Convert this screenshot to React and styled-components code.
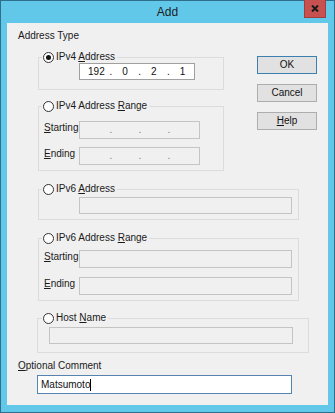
import React from "react";
import styled, { createGlobalStyle } from "styled-components";

const GlobalStyle = createGlobalStyle`
  html, body {
    margin: 0;
    padding: 0;
    background: #ffffff;
  }
  body {
    font-family: "Liberation Sans Narrow", "Liberation Sans", Arial, sans-serif;
    font-size: 10px;
    color: #1a1a1a;
  }
`;

// ---------- window frame ----------

const Window = styled.div`
  width: 335px;
  height: 413px;
  box-sizing: border-box;
  border: 1px solid #2f6f8c;
  background: #62c8ea;
  display: flex;
  flex-direction: column;
`;

const TitleBar = styled.div`
  height: 22px;
  flex: none;
  display: grid;
  grid-template-columns: 1fr auto 1fr;
  align-items: start;
`;

const Title = styled.div`
  grid-column: 2;
  font-family: "Liberation Sans", Arial, sans-serif;
  font-size: 12px;
  line-height: 23px;
  color: #1e1e1e;
`;

const CloseButton = styled.div`
  grid-column: 3;
  justify-self: end;
  margin: -1px 8px 0 0;
  width: 22px;
  height: 18px;
  box-sizing: border-box;
  background: #c75050;
  border: 1px solid #a33d3d;
  border-top: none;
  display: flex;
  align-items: center;
  justify-content: center;
`;

const Client = styled.div`
  flex: none;
  height: 382px;
  margin: 0 6px;
  box-sizing: border-box;
  background: #f0f0f0;
  padding: 7px 0 0 11px;
  display: flex;
  flex-direction: column;
`;

// ---------- layout ----------

const TopRow = styled.div`
  display: flex;
  align-items: flex-start;
`;

const LeftColumn = styled.div`
  width: 206px;
  display: flex;
  flex-direction: column;
`;

const ButtonColumn = styled.div`
  margin-left: 33px;
  padding-top: 26px;
  display: flex;
  flex-direction: column;
  gap: 10px;
`;

const Caption = styled.div`
  line-height: 12px;
  height: 12px;
  white-space: nowrap;
  margin-top: ${(p) => p.$mt || 0}px;
`;

// ---------- group box ----------

const Group = styled.fieldset`
  margin: ${(p) => p.$mt}px 0 0 ${(p) => p.$ml}px;
  padding: ${(p) => p.$pt}px 0 ${(p) => p.$pb}px 0;
  width: ${(p) => p.$w}px;
  box-sizing: border-box;
  min-inline-size: 0;
  border: 1px solid #dcdcdc;
  display: flex;
  flex-direction: column;
  gap: ${(p) => p.$gap || 0}px;
`;

const Legend = styled.legend`
  margin-left: ${(p) => p.$offset}px;
  padding: 0 2px 0 1px;
  height: 12px;
  line-height: 12px;
  display: flex;
  align-items: center;
  gap: 2px;
  white-space: nowrap;
`;

const Radio = styled.span`
  width: 11px;
  height: 11px;
  box-sizing: border-box;
  border-radius: 50%;
  border: 1px solid #333333;
  background: #ffffff;
  display: flex;
  align-items: center;
  justify-content: center;
  &::after {
    content: "";
    width: 5px;
    height: 5px;
    border-radius: 50%;
    background: ${(p) => (p.$checked ? "#111111" : "transparent")};
  }
`;

const FieldRow = styled.div`
  margin-left: ${(p) => p.$ml}px;
  display: grid;
  grid-template-columns: 35px auto;
  align-items: start;
`;

const RowLabel = styled.span`
  line-height: 12px;
  margin-top: 1px;
`;

const TextBox = styled.div`
  width: ${(p) => p.$w}px;
  height: ${(p) => p.$h}px;
  margin-left: ${(p) => p.$ml || 0}px;
  box-sizing: border-box;
  border: 1px solid ${(p) => (p.$disabled ? "#c4c4c4" : "#a0a0a0")};
  background: ${(p) => (p.$disabled ? "#f0f0f0" : "#ffffff")};
  display: flex;
  align-items: center;
  padding-left: 5px;
`;

const Segment = styled.span`
  width: 23px;
  text-align: center;
  line-height: 12px;
  color: #111111;
`;

const Dot = styled.span`
  width: 6px;
  text-align: center;
  line-height: 12px;
  color: ${(p) => (p.$disabled ? "#7a7a7a" : "#111111")};
`;

const CommentInput = styled.div`
  margin: 3px 0 0 19px;
  width: 255px;
  height: 19px;
  box-sizing: border-box;
  border: 1px solid #5584b0;
  background: #ffffff;
  padding-left: 3px;
  display: flex;
  align-items: center;
  line-height: 12px;
  color: #111111;
`;

const Caret = styled.span`
  width: 1px;
  height: 12px;
  background: #000000;
`;

const Button = styled.div`
  width: 60px;
  height: 18px;
  box-sizing: border-box;
  border: 1px solid ${(p) => (p.$default ? "#3c7fb1" : "#adadad")};
  background: #e1e1e1;
  display: flex;
  align-items: center;
  justify-content: center;
  line-height: 12px;
  color: #111111;
`;

const Key = styled.u`
  text-decoration-thickness: 1px;
  text-underline-offset: 1px;
`;

// ---------- pieces ----------

function IpBox({ w, h, ml, values, disabled }) {
  const parts = values || ["", "", "", ""];
  return (
    <TextBox $w={w} $h={h} $ml={ml} $disabled={disabled}>
      {parts.map((v, i) => (
        <React.Fragment key={i}>
          {i > 0 && <Dot $disabled={disabled}>.</Dot>}
          <Segment>{v}</Segment>
        </React.Fragment>
      ))}
    </TextBox>
  );
}

function RadioLegend({ offset, checked, children }) {
  return (
    <Legend $offset={offset}>
      <Radio $checked={checked} />
      <span>{children}</span>
    </Legend>
  );
}

export default function App() {
  return (
    <>
      <GlobalStyle />
      <Window>
        <TitleBar>
          <Title>Add</Title>
          <CloseButton>
            <svg width="8" height="7" viewBox="0 0 8 7">
              <path d="M1 0.5 L7 6.5 M7 0.5 L1 6.5" stroke="#1a1a1a" strokeWidth="2" />
            </svg>
          </CloseButton>
        </TitleBar>
        <Client>
          <TopRow>
            <LeftColumn>
              <Caption>Address Type</Caption>
              <Group $mt={9} $ml={20} $w={186} $pt={0} $pb={9}>
                <RadioLegend offset={3} checked>
                  IPv4 <Key>A</Key>ddress
                </RadioLegend>
                <IpBox w={116} h={17} ml={40} values={["192", "0", "2", "1"]} />
              </Group>
              <Group $mt={10} $ml={20} $w={186} $pt={9} $pb={5} $gap={8}>
                <RadioLegend offset={3}>
                  IPv4 Address <Key>R</Key>ange
                </RadioLegend>
                <FieldRow $ml={5}>
                  <RowLabel>
                    <Key>S</Key>tarting
                  </RowLabel>
                  <IpBox w={121} h={18} disabled />
                </FieldRow>
                <FieldRow $ml={5}>
                  <RowLabel>
                    <Key>E</Key>nding
                  </RowLabel>
                  <IpBox w={121} h={18} disabled />
                </FieldRow>
              </Group>
            </LeftColumn>
            <ButtonColumn>
              <Button $default>OK</Button>
              <Button>Cancel</Button>
              <Button>
                <Key>H</Key>elp
              </Button>
            </ButtonColumn>
          </TopRow>

          <Group $mt={12} $ml={20} $w={261} $pt={2} $pb={5}>
            <RadioLegend offset={3}>
              IPv6 <Key>A</Key>ddress
            </RadioLegend>
            <TextBox $w={213} $h={17} $ml={40} $disabled />
          </Group>

          <Group $mt={12} $ml={20} $w={261} $pt={6} $pb={5} $gap={9}>
            <RadioLegend offset={3}>
              IPv6 Address <Key>R</Key>ange
            </RadioLegend>
            <FieldRow $ml={5}>
              <RowLabel>
                <Key>S</Key>tarting
              </RowLabel>
              <TextBox $w={213} $h={18} $disabled />
            </FieldRow>
            <FieldRow $ml={5}>
              <RowLabel>
                <Key>E</Key>nding
              </RowLabel>
              <TextBox $w={213} $h={18} $disabled />
            </FieldRow>
          </Group>

          <Group $mt={11} $ml={19} $w={272} $pt={3} $pb={8}>
            <RadioLegend offset={4}>
              Host <Key>N</Key>ame
            </RadioLegend>
            <TextBox $w={244} $h={17} $ml={11} $disabled />
          </Group>

          <Caption $mt={7}>
            <Key>O</Key>ptional Comment
          </Caption>
          <CommentInput>
            Matsumoto
            <Caret />
          </CommentInput>
        </Client>
      </Window>
    </>
  );
}
